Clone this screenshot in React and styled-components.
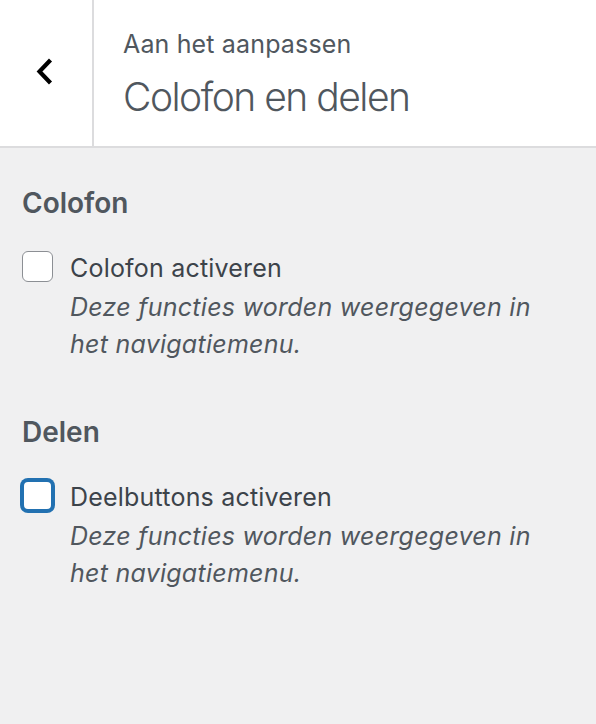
import React from 'react'
import styled, {createGlobalStyle} from 'styled-components';

const Global = createGlobalStyle`
body{
    margin: 0;
    background: #f0f0f1;
    font-family: Inter, "Noto Sans", sans-serif;
}
`;

const App = () => {
    return (
        <Panel>
            <Global/>
            <Header>
                <BackButton aria-label="Terug">
                    <svg width="20" height="30" viewBox="0 0 20 30">
                        <polyline points="14.5,3 3.5,14.5 14.5,26" fill="none" stroke="#000" strokeWidth="4.2" strokeLinecap="butt" strokeLinejoin="miter"/>
                    </svg>
                </BackButton>
                <Titles>
                    <Sub>Aan het aanpassen</Sub>
                    <Title>Colofon en delen</Title>
                </Titles>
            </Header>
            <Body>
                {/*colofon*/}
                <Section>
                    <Heading>Colofon</Heading>
                    <Option>
                        <Box/>
                        <div>
                            <Label>Colofon activeren</Label>
                            <Desc>Deze functies worden weergegeven in het navigatiemenu.</Desc>
                        </div>
                    </Option>
                </Section>
                {/*delen*/}
                <Section>
                    <Heading>Delen</Heading>
                    <Option>
                        <Box focused/>
                        <div>
                            <Label>Deelbuttons activeren</Label>
                            <Desc>Deze functies worden weergegeven in het navigatiemenu.</Desc>
                        </div>
                    </Option>
                </Section>
            </Body>
        </Panel>
    );
};

const Panel = styled.div`
width: 596px;
min-height: 724px;
background: #f0f0f1;
`;

const Header = styled.div`
display: flex;
height: 146px;
background: white;
border-bottom: 2px solid #dcdcde;
`;

const BackButton = styled.div`
width: 92px;
border-right: 2px solid #dcdcde;
display: flex;
align-items: center;
justify-content: center;
padding-bottom: 2px;
`;

const Titles = styled.div`
display: flex;
flex-direction: column;
padding: 29px 0 0 29px;
`;

const Sub = styled.span`
font-size: 25px;
letter-spacing: 0.15px;
color: #50575e;
line-height: 30px;
`;

const Title = styled.span`
font-size: 39px;
font-weight: 300;
letter-spacing: -1.5px;
color: #50575e;
line-height: 48px;
margin-top: 14px;
`;

const Body = styled.div`
padding: 38px 22px 0 22px;
`;

const Section = styled.div`
margin-bottom: 52px;
`;

const Heading = styled.h3`
margin: 0 0 31px 0;
font-size: 28px;
font-weight: 600;
color: #50575e;
line-height: 34px;
`;

const Option = styled.div`
display: flex;
gap: 17px;
`;

const Box = styled.div`
flex: none;
width: 31px;
height: 31px;
box-sizing: border-box;
border-radius: 6px;
background: white;
border: ${p => p.focused ? '2px solid #2271b1' : '1.5px solid #8c8f94'};
box-shadow: ${p => p.focused ? '0 0 0 2px #2271b1' : 'none'};
`;

const Label = styled.div`
font-size: 25px;
letter-spacing: 0.2px;
color: #3c434a;
line-height: 34px;
`;

const Desc = styled.div`
margin-top: 4px;
font-size: 25px;
font-style: italic;
letter-spacing: 0.25px;
color: #50575e;
line-height: 37px;
max-width: 490px;
`;

export default App;
